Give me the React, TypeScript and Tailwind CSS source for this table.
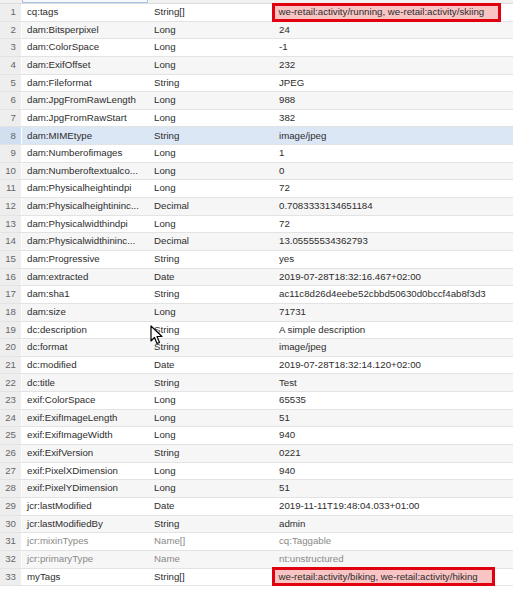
type Prop = {
  name: string;
  type: string;
  value: string;
  muted?: boolean;
  flagged?: boolean;
  flagWidth?: string;
};

// names are shown as the grid clips them
const PROPS: Prop[] = [
  { name: "cq:tags", type: "String[]", value: "we-retail:activity/running, we-retail:activity/skiing", flagged: true, flagWidth: "w-[229px]" },
  { name: "dam:Bitsperpixel", type: "Long", value: "24" },
  { name: "dam:ColorSpace", type: "Long", value: "-1" },
  { name: "dam:ExifOffset", type: "Long", value: "232" },
  { name: "dam:Fileformat", type: "String", value: "JPEG" },
  { name: "dam:JpgFromRawLength", type: "Long", value: "988" },
  { name: "dam:JpgFromRawStart", type: "Long", value: "382" },
  { name: "dam:MIMEtype", type: "String", value: "image/jpeg" },
  { name: "dam:Numberofimages", type: "Long", value: "1" },
  { name: "dam:Numberoftextualco...", type: "Long", value: "0" },
  { name: "dam:Physicalheightindpi", type: "Long", value: "72" },
  { name: "dam:Physicalheightininc...", type: "Decimal", value: "0.7083333134651184" },
  { name: "dam:Physicalwidthindpi", type: "Long", value: "72" },
  { name: "dam:Physicalwidthininc...", type: "Decimal", value: "13.05555534362793" },
  { name: "dam:Progressive", type: "String", value: "yes" },
  { name: "dam:extracted", type: "Date", value: "2019-07-28T18:32:16.467+02:00" },
  { name: "dam:sha1", type: "String", value: "ac11c8d26d4eebe52cbbd50630d0bccf4ab8f3d3" },
  { name: "dam:size", type: "Long", value: "71731" },
  { name: "dc:description", type: "String", value: "A simple description" },
  { name: "dc:format", type: "String", value: "image/jpeg" },
  { name: "dc:modified", type: "Date", value: "2019-07-28T18:32:14.120+02:00" },
  { name: "dc:title", type: "String", value: "Test" },
  { name: "exif:ColorSpace", type: "Long", value: "65535" },
  { name: "exif:ExifImageLength", type: "Long", value: "51" },
  { name: "exif:ExifImageWidth", type: "Long", value: "940" },
  { name: "exif:ExifVersion", type: "String", value: "0221" },
  { name: "exif:PixelXDimension", type: "Long", value: "940" },
  { name: "exif:PixelYDimension", type: "Long", value: "51" },
  { name: "jcr:lastModified", type: "Date", value: "2019-11-11T19:48:04.033+01:00" },
  { name: "jcr:lastModifiedBy", type: "String", value: "admin" },
  { name: "jcr:mixinTypes", type: "Name[]", value: "cq:Taggable", muted: true },
  { name: "jcr:primaryType", type: "Name", value: "nt:unstructured", muted: true },
  { name: "myTags", type: "String[]", value: "we-retail:activity/biking, we-retail:activity/hiking", flagged: true, flagWidth: "w-[223px]" },
];

const SELECTED = 8;

function Cursor() {
  return (
    <svg
      className="absolute left-[150px] top-[325px] pointer-events-none"
      width="13"
      height="20"
      viewBox="0 0 13 20"
    >
      <path
        d="M1 1 L1 16 L4.5 12.5 L7 18.5 L9.5 17.5 L7 11.5 L12 11.5 Z"
        fill="#fff"
        stroke="#000"
        strokeWidth="1.2"
        strokeLinejoin="round"
      />
    </svg>
  );
}

export default function App() {
  return (
    <div className="relative w-[513px] h-[590px] overflow-hidden bg-white font-['Liberation_Sans',Arial,sans-serif] text-[9.7px] text-[#2d2d2d]">
      {/* header stub, scrolled mostly out of view */}
      <div className="flex h-[4px] bg-[#f1f1f1] border-b border-[#dcdcdc]">
        <div className="w-[22px]" />
        <div className="w-[126px] border-x border-b border-[#a9c4e6] bg-[#f6f8fb]" />
      </div>

      {PROPS.map((p, i) => {
        const n = i + 1;
        const sel = n === SELECTED;
        const odd = n % 2 === 1;
        const rowBg = sel ? "bg-[#dce7f6]" : odd ? "bg-white" : "bg-[#f6f6f6]";
        const numBg = sel ? "bg-[#d2dff0]" : "bg-[#eeeeee]";
        const txt = p.muted ? "text-[#8a8a8a]" : "";
        return (
          <div key={n} className={`flex h-[17.65px] items-stretch border-b border-[#e3e3e3] ${rowBg} ${txt}`}>
            <div className={`w-[22px] shrink-0 flex items-center justify-end pr-[5px] text-[#666] border-r border-white ${numBg}`}>
              {n}
            </div>
            <div className="w-[126px] shrink-0 flex items-center pl-[5px] whitespace-nowrap">
              {p.name}
            </div>
            <div className="w-[124px] shrink-0 flex items-center pl-[6px]">{p.type}</div>
            <div className="flex-1 flex items-center min-w-0">
              {p.flagged ? (
                <div
                  className={`${p.flagWidth} h-[19px] flex items-center border-[3px] border-[#e1000f] bg-[#f8c4c4] pl-[3.5px] whitespace-nowrap overflow-hidden`}
                >
                  {p.value}
                </div>
              ) : (
                <span className="pl-[7px] whitespace-nowrap">{p.value}</span>
              )}
            </div>
          </div>
        );
      })}

      <Cursor />
    </div>
  );
}
